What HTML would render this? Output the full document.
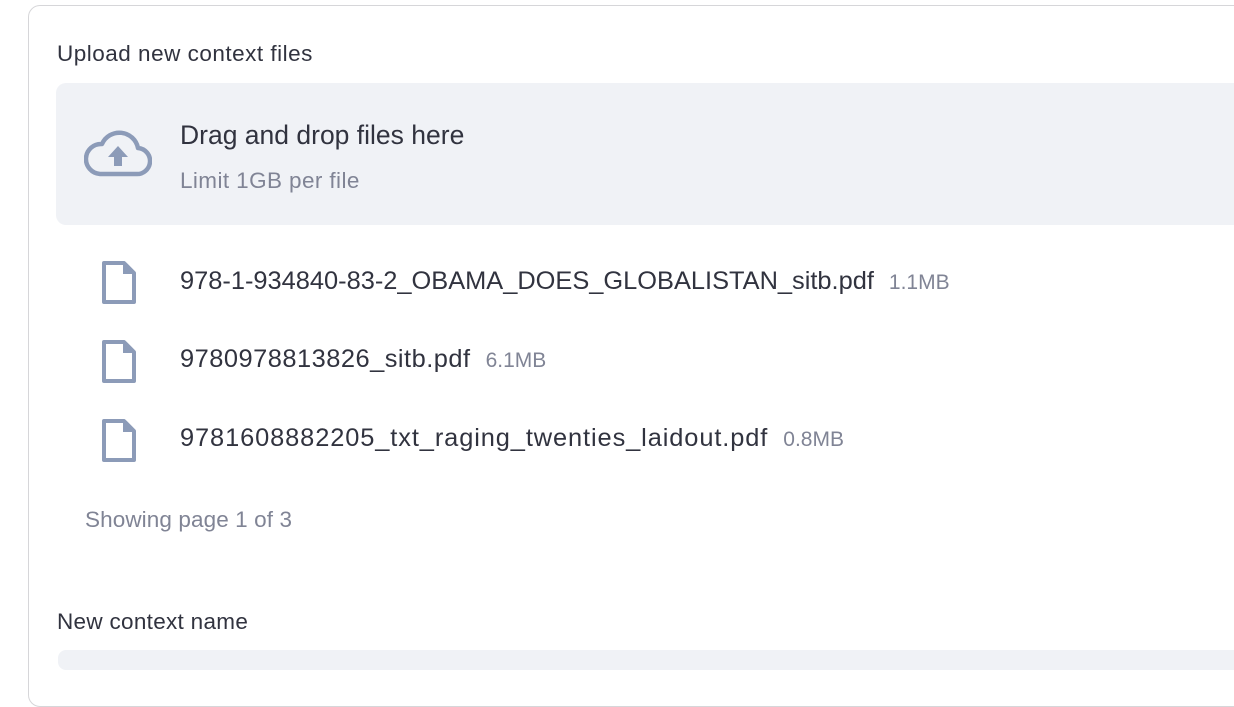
<!DOCTYPE html>
<html><head><style>
html,body{margin:0;padding:0;background:#fff;width:1234px;height:654px;overflow:hidden;font-family:"Liberation Sans",sans-serif;color:#31333f}
.card{position:absolute;left:28px;top:5px;width:1240px;height:700px;border:1px solid #d6d6d9;border-radius:12px}
.abs{position:absolute;white-space:nowrap;line-height:30px}
.drop{position:absolute;left:56px;top:83px;width:1200px;height:142px;background:#f0f2f6;border-radius:10px}
.gray{color:#808495}
.sz{font-size:21px;margin-left:15px;letter-spacing:0}
</style></head><body>
<div class="card"></div>
<div class="abs" style="left:57px;top:39px;font-size:22.5px;letter-spacing:0.5px">Upload new context files</div>
<div class="drop"></div>
<svg class="abs" style="left:84px;top:130px" width="68" height="48" viewBox="0 0 68 48"><path d="M16 44 H52 A13 13 0 0 0 54 18 A19 19 0 0 0 18 14 A15 15 0 0 0 16 44 Z" fill="none" stroke="#8c9bb8" stroke-width="4.5" stroke-linejoin="round"/><path d="M34 16 L44 27 H38 V36 H30 V27 H24 Z" fill="#8c9bb8"/></svg>
<div class="abs" style="left:180px;top:120px;font-size:26.5px">Drag and drop files here</div>
<div class="abs gray" style="left:180px;top:166px;font-size:22.5px;letter-spacing:0.4px">Limit 1GB per file</div>
<svg class="abs" style="left:100px;top:260px" width="38" height="46" viewBox="0 0 38 46"><path d="M4 3 H24 L34 13 V42 H4 Z" fill="none" stroke="#8c9bb8" stroke-width="4" stroke-linejoin="round"/><path d="M23 3 V14 H34 Z" fill="#8c9bb8"/></svg>
<div class="abs" style="left:180px;top:266px;font-size:25.4px">978-1-934840-83-2_OBAMA_DOES_GLOBALISTAN_sitb.pdf<span class="gray sz">1.1MB</span></div>
<svg class="abs" style="left:100px;top:339px" width="38" height="46" viewBox="0 0 38 46"><path d="M4 3 H24 L34 13 V42 H4 Z" fill="none" stroke="#8c9bb8" stroke-width="4" stroke-linejoin="round"/><path d="M23 3 V14 H34 Z" fill="#8c9bb8"/></svg>
<div class="abs" style="left:180px;top:344px;font-size:25.4px;letter-spacing:0.5px">9780978813826_sitb.pdf<span class="gray sz">6.1MB</span></div>
<svg class="abs" style="left:100px;top:418px" width="38" height="46" viewBox="0 0 38 46"><path d="M4 3 H24 L34 13 V42 H4 Z" fill="none" stroke="#8c9bb8" stroke-width="4" stroke-linejoin="round"/><path d="M23 3 V14 H34 Z" fill="#8c9bb8"/></svg>
<div class="abs" style="left:180px;top:423px;font-size:25.4px;letter-spacing:0.9px">9781608882205_txt_raging_twenties_laidout.pdf<span class="gray sz">0.8MB</span></div>
<div class="abs gray" style="left:85px;top:505px;font-size:22.5px;letter-spacing:0.1px">Showing page 1 of 3</div>
<div class="abs" style="left:57px;top:607px;font-size:22.5px;letter-spacing:0.3px">New context name</div>
<div class="abs" style="left:58px;top:650px;width:1200px;height:20px;background:#f0f2f6;border-radius:8px"></div>
</body></html>
